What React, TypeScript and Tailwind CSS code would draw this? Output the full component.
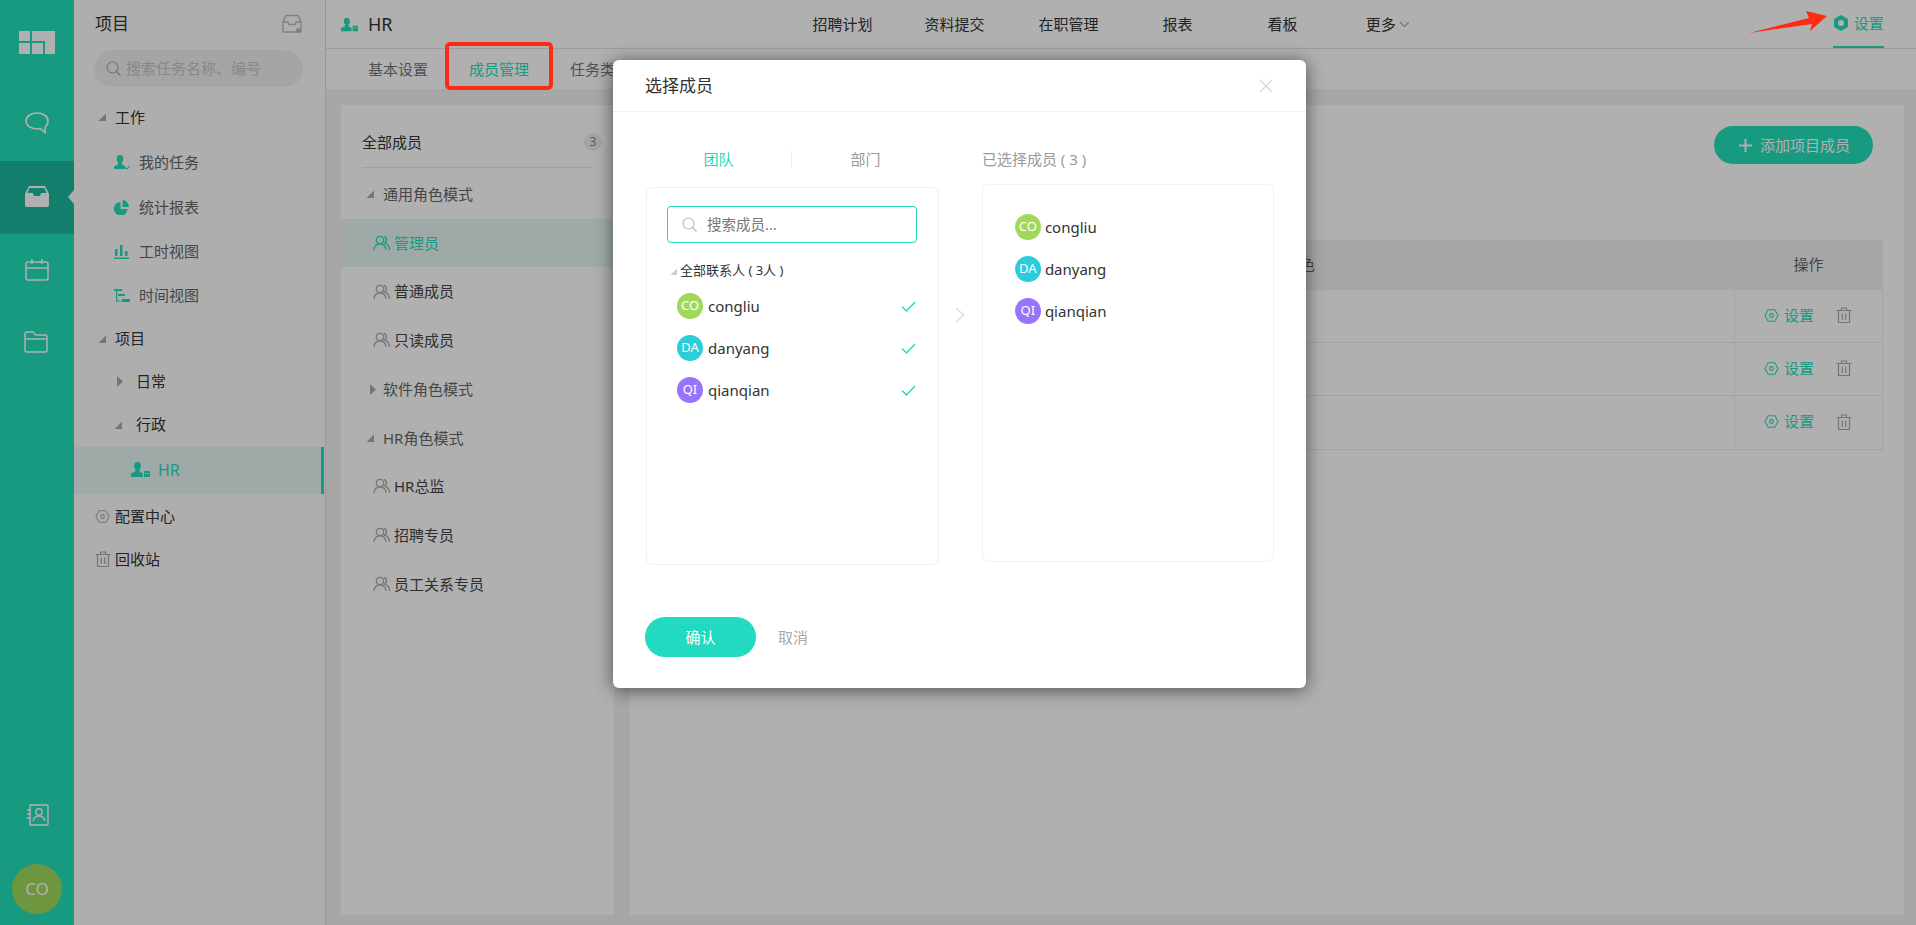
import React from "react";

const Users = ({ c = "#999" }: { c?: string }) => (
  <svg width="18" height="16" viewBox="0 0 18 16" fill="none" stroke={c} strokeWidth="1.3" className="shrink-0">
    <circle cx="7" cy="5" r="3.7" />
    <path d="M1 15c0-3.600 2.600-6.200 6-6.200s6 2.600 6 6.200" />
    <path d="M10.600 1.300a3.700 3.700 0 0 1 .9 6.900c2.900.8 4.900 3.400 5.100 6.800" />
  </svg>
);

const PersonCheck = () => (
  <svg width="16" height="15" viewBox="0 0 16 15" fill="#23dfbc" className="shrink-0">
    <ellipse cx="6" cy="4" rx="3.300" ry="4" />
    <path d="M4.200 7.500h3.600l.4 2.200 3.300 1.600V14H0v-2.700l3.800-1.600z" />
    <path d="M12 12.800l1.300 1.200 2.300-2.800" fill="none" stroke="#23dfbc" strokeWidth="1.100" />
  </svg>
);

const PersonCase = ({ w }: { w: number }) => (
  <svg width={w} height="15" viewBox="0 0 19 15" fill="#23dfbc" className="shrink-0">
    <ellipse cx="6.500" cy="4" rx="3.400" ry="4" />
    <path d="M4.600 7.500h3.800l.4 2.200 3 1.600V15H0v-3.700l4.200-1.600z" />
    <path d="M13 9h6v6h-6zM14 11h4v.8h-4z" fillRule="evenodd" />
  </svg>
);

const Hex = ({ c = "#999", size = 15 }: { c?: string; size?: number }) => (
  <svg width={size} height={size} viewBox="0 0 16 16" fill="none" stroke={c} strokeWidth="1.1" className="shrink-0">
    <path d="M1 8l3.400-6.200h7.200L15 8l-3.400 6.200H4.400z" />
    <circle cx="8" cy="8" r="2" />
  </svg>
);

const Trash = ({ c = "#aaa" }: { c?: string }) => (
  <svg width="16" height="16" viewBox="0 0 16 16" fill="none" stroke={c} strokeWidth="1.2" className="shrink-0">
    <path d="M0.500 3.500h15M5.500 3.500V1h5v2.500M2.500 3.500v12h11v-12M6.300 6.500v6.500M9.700 6.500v6.500" />
  </svg>
);

const Down = ({ c = "#aaa" }: { c?: string }) => (
  <svg width="8" height="8" viewBox="0 0 8 8" className="shrink-0">
    <path d="M8 0.500V8H0.500z" fill={c} />
  </svg>
);

const Right = () => (
  <svg width="6" height="11" viewBox="0 0 6 11" className="shrink-0">
    <path d="M0 0l6 5.500L0 11z" fill="#aaa" />
  </svg>
);

const SideRow = ({ icon, label, cls }: { icon: React.ReactNode; label: string; cls: string }) => (
  <div className={`flex items-center text-[15px] text-[#666] ${cls}`}>
    <span className="flex w-[25px] shrink-0 items-center">{icon}</span>
    <span>{label}</span>
  </div>
);

const RoleRow = ({ label, active }: { label: string; active?: boolean }) => (
  <div className={`flex h-[48.700px] items-center gap-[3px] pl-[32px] text-[15px] ${active ? "bg-[#e7f7f3] text-[#23dfbc]" : "text-[#444]"}`}>
    <Users c={active ? "#23dfbc" : "#aaa"} />
    <span>{label}</span>
  </div>
);

const RoleGroup = ({ label, open }: { label: string; open?: boolean }) => (
  <div className="flex h-[48.700px] items-center pl-[25px] text-[15px] text-[#666]">
    <span className="flex w-[17px] items-center">{open ? <Down /> : <span className="ml-[4px] flex"><Right /></span>}</span>
    <span>{label}</span>
  </div>
);

const Avatar = ({ t, cls }: { t: string; cls: string }) => (
  <span className={`flex h-[26px] w-[26px] shrink-0 items-center justify-center rounded-full text-[13px] text-white ${cls}`}>{t}</span>
);

const members = [
  { t: "CO", name: "congliu", cls: "bg-[#a0d95a]" },
  { t: "DA", name: "danyang", cls: "bg-[#2bcddc]" },
  { t: "QI", name: "qianqian", cls: "bg-[#9973fb]" },
];

const TableRow = ({ cls }: { cls: string }) => (
  <div className={`flex border-b border-[#eeeeee] ${cls}`}>
    <div className="flex-1" />
    <div className="flex w-[148px] items-center border-l border-[#eeeeee] pl-[29px] text-[15px] text-[#23dfbc]">
      <Hex c="#23dfbc" />
      <span className="ml-[5px]">设置</span>
      <span className="ml-[22px] flex"><Trash /></span>
    </div>
  </div>
);

export default function App() {
  return (
    <div className="relative flex h-[925px] w-[1916px] overflow-hidden bg-[#f2f2f2] text-[#333] [font-family:'Noto_Sans','Noto_Sans_CJK_SC',sans-serif]">
      {/* rail */}
      <div className="flex w-[74px] shrink-0 flex-col bg-[#23dfbc]">
        <div className="flex h-[161px] flex-col items-center">
          <svg width="36" height="23" viewBox="0 0 36 23" fill="#fff" className="mt-[31px]">
            <path d="M0 0h11v10H0zM0 12h11v11H0zM13 12h11v11H13zM13 0h23v23H26V10H13z" />
          </svg>
          <svg width="24" height="22" viewBox="0 0 24 22" fill="none" stroke="#fff" strokeWidth="1.6" className="mt-[58px]">
            <path d="M12 1C5.900 1 1 4.300 1 9c0 4.500 4.700 8 11 8 1.300 0 2.400-.1 3.500-.4L20 20.500l.2-5.400C22 13.600 23 11.400 23 9c0-4.700-5-8-11-8z" />
          </svg>
        </div>
        <div className="relative flex h-[73px] items-center justify-center bg-[#1cb89d]">
          <svg width="24" height="21" viewBox="0 0 24 21" fill="#fff" className="mt-[-2px]">
            <path d="M4 0h16l4 8v11a2 2 0 0 1-2 2H2a2 2 0 0 1-2-2V8zM4.500 2L2.500 7H8l1 3h6l1-3h5.500l-2-5z" fillRule="evenodd" />
          </svg>
          <span className="absolute right-0 top-[29px] h-0 w-0 border-y-[7px] border-r-[6px] border-y-transparent border-r-[#fcfcfc]" />
        </div>
        <div className="flex flex-col items-center">
          <svg width="24" height="22" viewBox="0 0 24 22" fill="none" stroke="#fff" strokeWidth="1.5" className="mt-[25px]">
            <rect x="1" y="3" width="22" height="18" rx="2" />
            <path d="M1 9h22M7 0v5M17 0v5" />
          </svg>
          <svg width="24" height="22" viewBox="0 0 24 22" fill="none" stroke="#fff" strokeWidth="1.5" className="ml-[-2px] mt-[50px]">
            <path d="M1 19V3a2 2 0 0 1 2-2h6l2.500 3H21a2 2 0 0 1 2 2v13a2 2 0 0 1-2 2H3a2 2 0 0 1-2-2zM1 8h22" />
          </svg>
        </div>
        <div className="mt-auto flex flex-col items-center">
          <svg width="22" height="22" viewBox="0 0 22 22" fill="none" stroke="#fff" strokeWidth="1.4" className="mb-[38px] ml-[1px]">
            <path d="M3 1h17a1 1 0 0 1 1 1v18a1 1 0 0 1-1 1H3V1z" />
            <circle cx="12" cy="8" r="3.200" />
            <path d="M6 17c.6-3.200 3-5 6-5s5.400 1.800 6 5M0 6h4M0 10h4M0 14h4" />
          </svg>
          <div className="mb-[11px] flex h-[50px] w-[50px] items-center justify-center rounded-full bg-[#a0d95a] text-[17px] text-white">CO</div>
        </div>
      </div>

      {/* sidebar */}
      <div className="w-[252px] shrink-0 border-r border-[#dddddd] bg-[#fcfcfc]">
        <div className="flex h-[48px] items-center justify-between pl-[21px] pr-[23px]">
          <span className="text-[17px] text-[#333]">项目</span>
          <svg width="20" height="20" viewBox="0 0 20 20" fill="none" stroke="#bbb" strokeWidth="1.4">
            <path d="M4 1.500h12l3 6.500v9a1 1 0 0 1-1 1H2a1 1 0 0 1-1-1V8zM1 8h5l1 2.500h6l1-2.500h5" />
            <circle cx="16.500" cy="16.500" r="1.800" fill="#bbb" />
          </svg>
        </div>
        <div className="ml-[20px] mt-[2px] flex h-[37px] w-[209px] items-center rounded-full bg-[#f0f0f0] pl-[12px] text-[15px] text-[#c4c4c4]">
          <svg width="15" height="15" viewBox="0 0 15 15" fill="none" stroke="#aaa" strokeWidth="1.2" className="shrink-0">
            <circle cx="6.500" cy="6.500" r="5.500" />
            <path d="M10.500 10.500l4 4" />
          </svg>
          <span className="ml-[5px]">搜索任务名称、编号</span>
        </div>
        <div className="mt-[8px]">
          <div className="flex h-[44px] items-center pl-[24px] text-[15px] text-[#333]">
            <span className="flex w-[17px]"><Down /></span>工作
          </div>
          <SideRow cls="mt-[1px] h-[45px] pl-[40px]" label="我的任务" icon={<PersonCheck />} />
          <SideRow cls="h-[44px] pl-[40px]" label="统计报表" icon={
            <svg width="15" height="15" viewBox="0 0 15 15" fill="#23dfbc">
              <path d="M6.500 2v7h7a6.800 6.800 0 1 1-7-7zM8.500 0a6.800 6.800 0 0 1 6.500 7H8.500z" />
            </svg>} />
          <SideRow cls="h-[44px] pl-[40px]" label="工时视图" icon={
            <svg width="15" height="15" viewBox="0 0 15 15" fill="#23dfbc">
              <path d="M1 5h2.500v7H1zM6 1h2.500v11H6zM11 7h2.500v5H11zM0 13.500h15V15H0z" />
            </svg>} />
          <SideRow cls="h-[44px] pl-[40px]" label="时间视图" icon={
            <svg width="16" height="15" viewBox="0 0 16 15" fill="#23dfbc">
              <path d="M0 1h8v2H0zM4 6h7v2H4zM8 11h8v3H8zM2 3h1.200v9.500H7v1H2z" />
            </svg>} />
          <div className="flex h-[43px] items-center pl-[24px] text-[15px] text-[#333]">
            <span className="flex w-[17px]"><Down /></span>项目
          </div>
          <div className="flex h-[42px] items-center pl-[43px] text-[15px] text-[#333]">
            <span className="flex w-[19px]"><Right /></span>日常
          </div>
          <div className="mt-[1px] flex h-[43px] items-center pl-[40px] text-[15px] text-[#333]">
            <span className="flex w-[22px]"><Down /></span>行政
          </div>
          <div className="mr-[1px] mt-[1px] flex h-[47px] items-center border-r-[3px] border-[#23dfbc] bg-[#e7f7f3] pb-[2px] pl-[57px] text-[16px] text-[#23dfbc]">
            <span className="flex w-[27px]"><PersonCase w={19} /></span>HR
          </div>
          <div className="mt-[1px] flex h-[42px] items-center pl-[21px] text-[15px] text-[#333]">
            <span className="flex w-[20px]"><Hex c="#aaa" /></span>配置中心
          </div>
          <div className="flex h-[44px] items-center pl-[21px] text-[15px] text-[#333]">
            <span className="flex w-[20px]"><Trash /></span>回收站
          </div>
        </div>
      </div>

      {/* main */}
      <div className="flex min-w-0 flex-1 flex-col">
        <div className="flex h-[49px] items-center border-b border-[#e4e4e4] bg-[#ffffff] text-[15px] text-[#333]">
          <span className="ml-[15px] flex"><PersonCase w={17} /></span>
          <span className="ml-[10px] text-[18px]">HR</span>
          <span className="ml-[420px]">招聘计划</span>
          <span className="ml-[52px]">资料提交</span>
          <span className="ml-[54px]">在职管理</span>
          <span className="ml-[64px]">报表</span>
          <span className="ml-[75px]">看板</span>
          <span className="ml-[68px]">更多</span>
          <svg width="11" height="7" viewBox="0 0 11 7" fill="none" stroke="#aaa" strokeWidth="1.2" className="ml-[3px]">
            <path d="M1 1l4.500 4.500L10 1" />
          </svg>
          <div className="ml-[423px] flex h-full items-center gap-[5px] border-b-[2px] border-[#23dfbc] text-[#23dfbc]">
            <svg width="16" height="16" viewBox="0 0 15 16">
              <path d="M7.500 0l7 4v8l-7 4-7-4V4zM7.500 5a3 3 0 1 0 0 6 3 3 0 0 0 0-6z" fill="#23dfbc" fillRule="evenodd" />
            </svg>
            <span>设置</span>
          </div>
        </div>
        <div className="flex h-[40px] items-center bg-white pl-[42px] text-[15px] text-[#777]">
          <span>基本设置</span>
          <span className="ml-[41px] text-[#23dfbc]">成员管理</span>
          <span className="ml-[41px]">任务类型</span>
        </div>
        <div className="flex flex-1 gap-[16px] pb-[10px] pl-[15px] pr-[12px] pt-[16px]">
          <div className="w-[273px] shrink-0 bg-white">
            <div className="ml-[21px] mr-[21px] mt-[20px] flex h-[43px] items-center justify-between border-b border-[#e6e6e6] pb-[8px] text-[15px] text-[#333]">
              <span>全部成员</span>
              <span className="mr-[-9px] flex h-[18px] w-[18px] items-center justify-center rounded-full bg-[#eeeeee] text-[12px] text-[#888]">3</span>
            </div>
            <div className="mt-[2px]">
              <RoleGroup label="通用角色模式" open />
              <RoleRow label="管理员" active />
              <RoleRow label="普通成员" />
              <RoleRow label="只读成员" />
              <RoleGroup label="软件角色模式" />
              <RoleGroup label="HR角色模式" open />
              <RoleRow label="HR总监" />
              <RoleRow label="招聘专员" />
              <RoleRow label="员工关系专员" />
            </div>
          </div>
          <div className="min-w-0 flex-1 bg-white">
            <div className="flex justify-end pr-[31px] pt-[21px]">
              <div className="flex h-[38px] w-[159px] items-center rounded-full bg-[#23dfbc] pl-[25px] text-[15px] text-white">
                <svg width="13" height="13" viewBox="0 0 13 13" fill="#fff"><path d="M5.500 0h2v5.500H13v2H7.500V13h-2V7.500H0v-2h5.500z" /></svg>
                <span className="ml-[8px]">添加项目成员</span>
              </div>
            </div>
            <div className="ml-[20px] mr-[21px] mt-[76px] border-x border-t border-[#eeeeee]">
              <div className="flex h-[49px] items-center bg-[#f2f2f2] text-[15px] text-[#666]">
                <div className="flex-1 pl-[634px] pb-[2px]">角色</div>
                <div className="flex h-full w-[148px] items-center justify-center border-l border-[#eeeeee] pb-[2px]">操作</div>
              </div>
              <TableRow cls="h-[53px] pb-[2px]" />
              <TableRow cls="h-[53px] pb-[2px]" />
              <TableRow cls="h-[54px] pb-[2px]" />
            </div>
          </div>
        </div>
      </div>

      {/* overlay */}
      <div className="absolute inset-0 bg-black/[0.31]" />

      {/* annotations */}
      <div className="absolute left-[445px] top-[42px] h-[48px] w-[108px] rounded-[5px] border-[4px] border-[#ff2a14]" />
      <svg width="80" height="24" viewBox="0 0 80 24" className="absolute left-[1749px] top-[11px]">
        <path d="M0 22L60 7 57 0 78 5 61 20 63 13z" fill="#ff2a14" />
      </svg>

      {/* modal */}
      <div className="absolute left-[613px] top-[60px] h-[628px] w-[693px] rounded-[6px] bg-white shadow-[0_2px_18px_rgba(0,0,0,0.55)]">
        <div className="flex h-[52px] items-center justify-between border-b border-[#f0f0f0] pl-[32px] pr-[33px]">
          <span className="text-[17px] text-[#333]">选择成员</span>
          <svg width="14" height="14" viewBox="0 0 14 14" fill="none" stroke="#d8d8d8" strokeWidth="1.3"><path d="M1 1l12 12M13 1L1 13" /></svg>
        </div>
        <div className="flex items-start pl-[33px] pr-[32px] pt-[33px]">
          <div className="w-[293px]">
            <div className="flex h-[28px] items-center text-[15px]">
              <span className="w-[145px] text-center text-[#22d9bb]">团队</span>
              <span className="h-[16px] w-px bg-[#eeeeee]" />
              <span className="flex-1 text-center text-[#999]">部门</span>
            </div>
            <div className="mt-[14px] h-[378px] rounded-[6px] border border-[#f0f0f0] pl-[20px] pr-[22px] pt-[18px]">
              <div className="flex h-[37px] w-[250px] items-center rounded-[4px] border border-[#22d9bb] pl-[14px] text-[14.500px] text-[#777]">
                <svg width="15" height="15" viewBox="0 0 15 15" fill="none" stroke="#bbb" strokeWidth="1.2" className="shrink-0">
                  <circle cx="6.500" cy="6.500" r="5.500" /><path d="M10.500 10.500l4 4" />
                </svg>
                <span className="ml-[10px]">搜索成员...</span>
              </div>
              <div className="mt-[17px] flex h-[22px] items-center pl-[3px] text-[13px] text-[#333]">
                <span className="flex w-[10px]"><svg width="7" height="7" viewBox="0 0 8 8"><path d="M8 0.500V8H0.500z" fill="#ccc" /></svg></span>
                全部联系人 ( 3人 )
              </div>
              <div className="mt-[3px] flex flex-col">
                {members.map((m) => (
                  <div key={m.t} className="flex h-[42px] items-center pl-[10px] text-[15px] text-[#333]">
                    <Avatar t={m.t} cls={m.cls} />
                    <span className="ml-[5px] flex-1">{m.name}</span>
                    <svg width="15" height="11" viewBox="0 0 15 11" fill="none" stroke="#22d9bb" strokeWidth="1.4"><path d="M1 5.500l4.500 4.500L14 1" /></svg>
                  </div>
                ))}
              </div>
            </div>
          </div>
          <div className="flex w-[43px] justify-center pt-[162px]">
            <svg width="10" height="16" viewBox="0 0 10 16" fill="none" stroke="#dddddd" strokeWidth="1.5"><path d="M1 1l7.500 7L1 15" /></svg>
          </div>
          <div className="w-[293px]">
            <div className="flex h-[28px] items-center text-[15px] text-[#999]">已选择成员 ( 3 )</div>
            <div className="mt-[11px] h-[378px] rounded-[6px] border border-[#f0f0f0] pl-[32px] pt-[21px]">
              {members.map((m) => (
                <div key={m.t} className="flex h-[42px] items-center text-[15px] text-[#333]">
                  <Avatar t={m.t} cls={m.cls} />
                  <span className="ml-[4px]">{m.name}</span>
                </div>
              ))}
            </div>
          </div>
        </div>
        <div className="mt-[52px] flex items-center pl-[32px] text-[15px]">
          <div className="flex h-[40px] w-[111px] items-center justify-center rounded-full bg-[#22dabf] text-white">确认</div>
          <span className="ml-[22px] text-[#aaa]">取消</span>
        </div>
      </div>
    </div>
  );
}
